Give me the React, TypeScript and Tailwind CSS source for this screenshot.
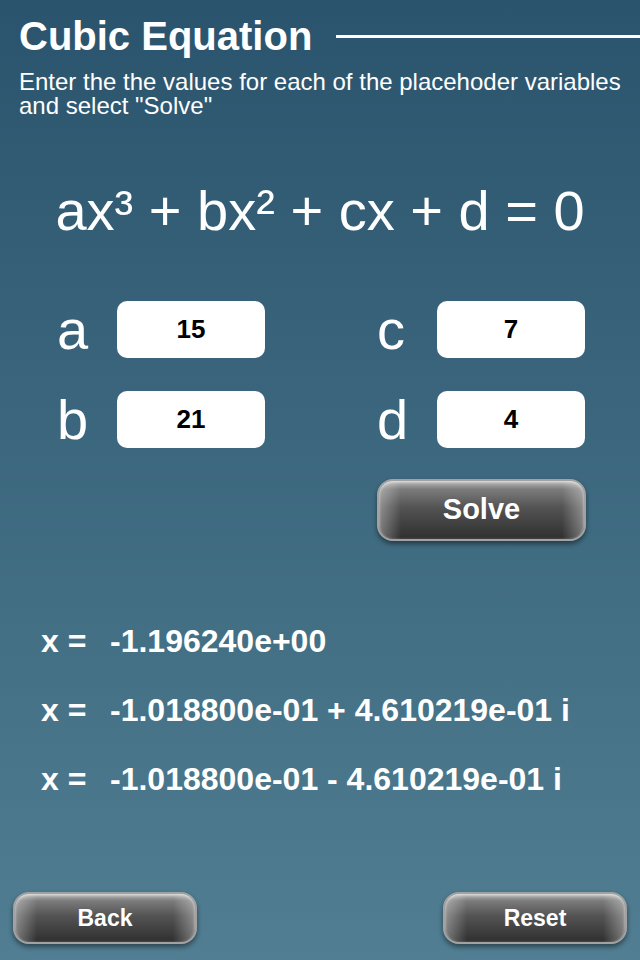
const GlossyButton = ({ label, className }: { label: string; className: string }) => (
  <button
    className={`relative overflow-hidden rounded-[16px] border-2 border-[#a2a2a2] bg-[linear-gradient(180deg,#bdbdbd_0%,#7c7c7c_14%,#545454_45%,#2f2f2f_100%)] font-bold text-white shadow-[inset_0_1px_3px_rgba(255,255,255,0.6),0_3px_5px_rgba(0,0,0,0.45)] ${className}`}
  >
    <span className="absolute inset-y-0 left-0 w-[22px] bg-[linear-gradient(90deg,rgba(255,255,255,0.35),rgba(255,255,255,0))]" />
    <span className="absolute inset-y-0 right-0 w-[22px] bg-[linear-gradient(270deg,rgba(255,255,255,0.35),rgba(255,255,255,0))]" />
    <span className="relative">{label}</span>
  </button>
);

const Field = ({ name, value }: { name: string; value: string }) => (
  <div className="flex items-center">
    <span className="w-[60px] text-[56px] leading-none text-white">{name}</span>
    <div className="flex h-[57px] w-[148px] items-center justify-center rounded-[10px] bg-white text-[26px] font-bold text-black">
      {value}
    </div>
  </div>
);

const roots = ['-1.196240e+00', '-1.018800e-01 + 4.610219e-01 i', '-1.018800e-01 - 4.610219e-01 i'];

export default function App() {
  return (
    <div className="flex h-[960px] w-[640px] flex-col bg-linear-to-b from-[#2a546d] to-[#517e92] font-['Liberation_Sans',Arial,sans-serif] text-white">
      <div className="flex items-center pl-[19px] pt-[14px]">
        <h1 className="text-[40px] font-bold leading-[44px]">Cubic Equation</h1>
        <div className="ml-[24px] h-[3px] flex-1 bg-white" />
      </div>
      <p className="mt-[12px] pl-[19px] pr-[12px] text-[24px] leading-[24px]">
        Enter the the values for each of the placehoder variables and select "Solve"
      </p>

      <div className="mt-[63px] text-center text-[56px] leading-[60px]">
        ax³ + bx² + cx + d = 0
      </div>

      <div className="mt-[60px] grid grid-cols-[320px_1fr] gap-y-[33px] pl-[57px]">
        <Field name="a" value="15" />
        <Field name="c" value="7" />
        <Field name="b" value="21" />
        <Field name="d" value="4" />
      </div>

      <div className="mt-[31px] grid grid-cols-[320px_1fr] pl-[57px]">
        <div />
        <GlossyButton label="Solve" className="h-[62px] w-[209px] text-[29px]" />
      </div>

      <div className="mt-[83px] flex flex-col gap-[34px] pl-[41px] text-[32px] font-bold leading-[35px]">
        {roots.map((r, i) => (
          <div key={i} className="flex">
            <span className="w-[69px]">x =</span>
            <span>{r}</span>
          </div>
        ))}
      </div>

      <div className="mt-auto flex justify-between px-[13px] pb-[16px]">
        <GlossyButton label="Back" className="h-[52px] w-[184px] text-[23px]" />
        <GlossyButton label="Reset" className="h-[52px] w-[184px] text-[23px]" />
      </div>
    </div>
  );
}
